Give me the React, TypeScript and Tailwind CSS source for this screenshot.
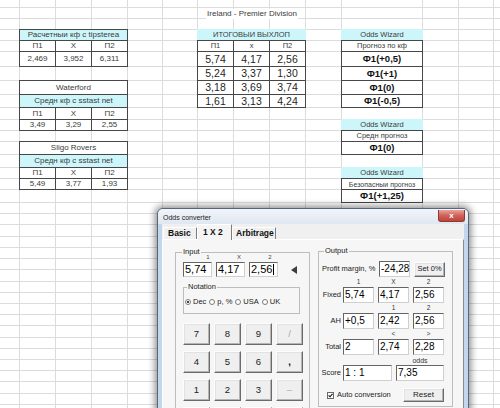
import React from "react";

// column widths / row heights of the visible part of the sheet, in px
const COLS = [20, 36, 36, 36, 35, 35, 36, 36, 36, 36, 81, 36, 35, 20];
const ROWS = [
  8, 11, 11, 11, 11, 15, 14, 14, 13, 12, 11, 11, 13, 13, 11, 11, 13, 11, 11, 12, 11, 11, 11, 12, 11, 11, 11,
  11, 12, 11, 11, 11, 11, 12, 11, 11, 11,
];

type Kind = "head" | "band" | "box" | "title";

interface SheetCell {
  r: number;
  c: number;
  span?: number;
  text: string;
  kind: Kind;
  t?: string;
}

const SMALL = "text-[8px] text-[#3b3b3b]";
const TINY = "text-[7.5px] text-[#3b3b3b]";
const BIG = "text-[10.5px] text-[#1f1f1f]";
const BOLD = "text-[9.5px] font-bold text-[#111]";

const row3 = (r: number, c: number, vals: string[], t = SMALL): SheetCell[] =>
  vals.map((text, i) => ({ r, c: c + i, text, kind: "box" as Kind, t }));

const CELLS: SheetCell[] = [
  { r: 1, c: 6, span: 3, text: "Ireland - Premier Division", kind: "title", t: SMALL },

  // tipsterea
  { r: 3, c: 1, span: 3, text: "Расчетныи кф с tipsterea", kind: "head", t: SMALL },
  ...row3(4, 1, ["П1", "X", "П2"]),
  ...row3(5, 1, ["2,469", "3,952", "6,311"]),

  // Waterford
  { r: 7, c: 1, span: 3, text: "Waterford", kind: "box", t: SMALL },
  { r: 8, c: 1, span: 3, text: "Средн кф с sstast net", kind: "head", t: SMALL },
  ...row3(9, 1, ["П1", "X", "П2"]),
  ...row3(10, 1, ["3,49", "3,29", "2,55"]),

  // Sligo Rovers
  { r: 12, c: 1, span: 3, text: "Sligo Rovers", kind: "box", t: SMALL },
  { r: 13, c: 1, span: 3, text: "Средн кф с sstast net", kind: "head", t: SMALL },
  ...row3(14, 1, ["П1", "X", "П2"]),
  ...row3(15, 1, ["5,49", "3,77", "1,93"]),

  // итог
  { r: 3, c: 6, span: 3, text: "ИТОГОВЫИ ВЫХЛОП", kind: "band", t: TINY },
  ...row3(4, 6, ["П1", "х", "П2"], TINY),
  ...row3(5, 6, ["5,74", "4,17", "2,56"], BIG),
  ...row3(6, 6, ["5,24", "3,37", "1,30"], BIG),
  ...row3(7, 6, ["3,18", "3,69", "3,74"], BIG),
  ...row3(8, 6, ["1,61", "3,13", "4,24"], BIG),

  // Odds Wizard
  { r: 3, c: 10, text: "Odds Wizard", kind: "band", t: TINY },
  { r: 4, c: 10, text: "Прогноз по кф", kind: "box", t: TINY },
  { r: 5, c: 10, text: "Ф1(+0,5)", kind: "box", t: BOLD },
  { r: 6, c: 10, text: "Ф1(+1)", kind: "box", t: BOLD },
  { r: 7, c: 10, text: "Ф1(0)", kind: "box", t: BOLD },
  { r: 8, c: 10, text: "Ф1(-0,5)", kind: "box", t: BOLD },
  { r: 10, c: 10, text: "Odds Wizard", kind: "band", t: TINY },
  { r: 11, c: 10, text: "Средн прогноз", kind: "box", t: TINY },
  { r: 12, c: 10, text: "Ф1(0)", kind: "box", t: BOLD },
  { r: 14, c: 10, text: "Odds Wizard", kind: "band", t: TINY },
  { r: 15, c: 10, text: "Безопасныи прогноз", kind: "box", t: "text-[7px] text-[#3b3b3b]" },
  { r: 16, c: 10, text: "Ф1(+1,25)", kind: "box", t: BOLD },
];

const KIND_CLS: Record<Kind, string> = {
  head: "bg-[#cdf6fa] border border-[#474747] -ml-px -mt-px",
  band: "bg-[#cdf6fa] -ml-px -mt-px",
  box: "bg-white border border-[#474747] -ml-px -mt-px",
  title: "",
};

const Sheet: React.FC = () => (
  <div className="grid grid-cols-[20px_36px_36px_36px_35px_35px_36px_36px_36px_36px_81px_36px_35px_20px] grid-rows-[8px_11px_11px_11px_11px_15px_14px_14px_13px_12px_11px_11px_13px_13px_11px_11px_13px_11px_11px_12px_11px_11px_11px_12px_11px_11px_11px_11px_12px_11px_11px_11px_11px_12px_11px_11px_11px]">
    {ROWS.map((_, r) =>
      COLS.map((_, c) => (
        <div
          key={`g${r}-${c}`}
          className="border-r border-b border-[#dcdcdc]"
          style={{ gridRow: r + 1, gridColumn: c + 1 }}
        />
      ))
    )}
    {CELLS.map((cell, i) => (
      <div
        key={i}
        className={`flex items-center justify-center overflow-hidden whitespace-nowrap leading-none ${KIND_CLS[cell.kind]} ${cell.t ?? SMALL}`}
        style={{ gridRow: cell.r + 1, gridColumn: `${cell.c + 1} / span ${cell.span ?? 1}` }}
      >
        {cell.kind === "title" ? <span className="bg-white px-[1px] py-[1px]">{cell.text}</span> : cell.text}
      </div>
    ))}
  </div>
);

// ---------- dialog ----------

const Field: React.FC<{ w: string; value: string; big?: boolean; caret?: boolean }> = ({ w, value, big, caret }) => (
  <div
    className={`${w} ${big ? "h-[15px] text-[11px]" : "h-[16px] text-[10px]"} flex items-center bg-white border border-t-[#646464] border-l-[#646464] border-r-[#cfcfcf] border-b-[#cfcfcf] pl-[1px] leading-none text-black`}
  >
    {value}
    {caret && <span className="ml-px inline-block h-[11px] w-px bg-black" />}
  </div>
);

const Btn: React.FC<{ w: string; h: string; label: string; cls?: string }> = ({ w, h, label, cls }) => (
  <div
    className={`${w} ${h} flex items-center justify-center bg-[#efefef] border border-t-[#fdfdfd] border-l-[#fdfdfd] border-r-[#6b6b6b] border-b-[#6b6b6b] shadow-[inset_-1px_-1px_0_#b4b4b4,inset_1px_1px_0_#e2e2e2] leading-none ${cls ?? "text-[#1b1b1b]"}`}
  >
    {label}
  </div>
);

const Radio: React.FC<{ on?: boolean; label: string }> = ({ on, label }) => (
  <div className="flex items-center gap-[2px]">
    <span className="flex h-[6px] w-[6px] items-center justify-center rounded-full border border-[#7b7b7b] bg-white">
      {on && <span className="h-[2px] w-[2px] rounded-full bg-black" />}
    </span>
    <span className="text-[7.5px] leading-none text-[#222]">{label}</span>
  </div>
);

// last row is cut off by the bottom of the screen, only the button tops show
const KEYS: { label: string; cls?: string }[] = [
  { label: "7" },
  { label: "8" },
  { label: "9" },
  { label: "/", cls: "text-[#a8a8a8]" },
  { label: "4" },
  { label: "5" },
  { label: "6" },
  { label: ",", cls: "font-bold text-black" },
  { label: "1" },
  { label: "2" },
  { label: "3" },
  { label: "–", cls: "text-[#a8a8a8]" },
  { label: "" },
  { label: "" },
  { label: "" },
  { label: "" },
];

const SmallLabels: React.FC<{ items: string[] }> = ({ items }) => (
  <div className="flex h-[10px] items-center gap-[4px] pl-[24px] text-[6.5px] leading-none text-[#333]">
    {items.map((t, i) => (
      <span key={i} className="w-[31px] text-center">
        {t}
      </span>
    ))}
  </div>
);

const OutRow: React.FC<{ label: string; values: string[] }> = ({ label, values }) => (
  <div className="flex h-[16px] items-center">
    <span className="w-[24px] pr-[2px] text-right text-[7.5px] leading-none text-[#222]">{label}</span>
    <div className="flex gap-[4px]">
      {values.map((v, i) => (
        <Field key={i} w="w-[31px]" value={v} />
      ))}
    </div>
  </div>
);

const Tab: React.FC<{ label: string; w: string; active?: boolean; pl: string }> = ({ label, w, active, pl }) => (
  <div
    className={`${w} ${pl} ${
      active ? "relative z-10 -mb-px h-[16px] bg-[#f4f4f4] pt-[3px]" : "h-[12px] pt-[1px]"
    } border-t border-l border-t-white border-l-white border-r border-r-[#7d7d7d] text-[8.5px] font-bold leading-none text-[#111] rounded-t-[1px]`}
  >
    {label}
  </div>
);

const OddsConverter: React.FC = () => (
  <div className="absolute left-[157px] top-[208px] flex h-[230px] w-[312px] flex-col rounded-t-[6px] border border-[#56667b] bg-[#c4d6eb] shadow-[0_0_7px_2px_rgba(0,0,0,0.45)]">
    {/* title bar */}
    <div className="flex h-[15px] items-start justify-between rounded-t-[5px] bg-gradient-to-b from-[#f2f5f9] to-[#dfe7f1] pl-[5px] pr-[3px]">
      <span className="pt-[4px] text-[7px] leading-[9px] text-[#1e1e1e]">Odds converter</span>
      <div className="mt-[1px] flex h-[12px] w-[27px] items-center justify-center rounded-b-[3px] border border-t-0 border-[#8a3a33] bg-gradient-to-b from-[#e8a39b] via-[#d0625a] to-[#c0433a] text-[8px] font-bold leading-none text-white">
        x
      </div>
    </div>

    {/* client area */}
    <div className="mx-[4px] flex flex-1 flex-col bg-[#f0f0f0]">
      <div className="flex h-[15px] items-end pl-[1px]">
        <Tab label="Basic" w="w-[34px]" pl="pl-[4px]" />
        <Tab label="1 X 2" w="w-[35px]" pl="pl-[5px]" active />
        <Tab label="Arbitrage" w="w-[44px]" pl="pl-[3px]" />
      </div>

      <div className="flex flex-1 items-start border-t border-l border-t-white border-l-white border-r border-r-[#8a8a8a] bg-[#f6f6f6] pl-[12px] pt-[8px]">
        {/* Input */}
        <fieldset className="h-[170px] w-[135px] border border-[#bdbdbd]">
          <legend className="ml-[6px] px-[1px] text-[7.5px] leading-[8px] text-[#222]">Input</legend>
          <div className="pl-[7px]">
            <div className="-mt-[2px] flex h-[6px] text-[6px] leading-[6px] text-[#444]">
              <span className="ml-[21px] w-[8px] text-center">1</span>
              <span className="ml-[23px] w-[8px] text-center">X</span>
              <span className="ml-[23px] w-[8px] text-center">2</span>
            </div>
            <div className="mt-[2px] flex h-[15px] items-center">
              <div className="flex gap-[4px]">
                <Field w="w-[29px]" value="5,74" big />
                <Field w="w-[29px]" value="4,17" big />
                <Field w="w-[29px]" value="2,56" big caret />
              </div>
              <svg className="ml-[13px]" width="6" height="8" viewBox="0 0 6 8">
                <polygon points="6,0 6,8 0,4" fill="#3e3e3e" />
              </svg>
            </div>

            <fieldset className="mt-[6px] w-[117px] border border-[#bdbdbd]">
              <legend className="ml-[3px] px-[1px] text-[7.5px] leading-[8px] text-[#222]">Notation</legend>
              <div className="flex h-[22px] items-center gap-[3px] pl-[1px]">
                <Radio on label="Dec" />
                <Radio label="p, %" />
                <Radio label="USA" />
                <Radio label="UK" />
              </div>
            </fieldset>

            <div className="mt-[9px] grid grid-cols-[27px_27px_27px_27px] gap-x-[4px] gap-y-[6px] text-[9.5px]">
              {KEYS.map((k, i) => (
                <Btn key={i} w="w-[27px]" h="h-[22px]" label={k.label} cls={k.cls} />
              ))}
            </div>
          </div>
        </fieldset>

        {/* Output */}
        <fieldset className="-mt-px ml-[8px] w-[135px] border border-[#bdbdbd] pb-[4px]">
          <legend className="ml-[5px] px-[1px] text-[7.5px] leading-[8px] text-[#222]">Output</legend>

          <div className="mt-[6px] flex h-[16px] items-center pl-[3px]">
            <span className="w-[57px] whitespace-nowrap text-[7.5px] leading-none text-[#222]">Profit margin, %</span>
            <Field w="w-[31px]" value="-24,28" />
            <div className="ml-[4px]">
              <Btn w="w-[31px]" h="h-[15px]" label="Set 0%" cls="text-[7.5px] text-[#222]" />
            </div>
          </div>

          <SmallLabels items={["1", "X", "2"]} />
          <OutRow label="Fixed" values={["5,74", "4,17", "2,56"]} />
          <SmallLabels items={["", "1", "2"]} />
          <OutRow label="AH" values={["+0,5", "2,42", "2,56"]} />
          <SmallLabels items={["", "<", ">"]} />
          <OutRow label="Total" values={["2", "2,74", "2,28"]} />
          <div className="flex h-[10px] items-center pl-[77px] text-[7px] leading-none text-[#333]">
            <span className="w-[48px] text-center">odds</span>
          </div>
          <div className="flex h-[16px] items-center">
            <span className="w-[24px] pr-[2px] text-right text-[7.5px] leading-none text-[#222]">Score</span>
            <Field w="w-[49px]" value="1 : 1" />
            <div className="ml-[4px]">
              <Field w="w-[48px]" value="7,35" />
            </div>
          </div>

          <div className="mt-[7px] flex h-[14px] items-center pl-[8px] pr-[8px]">
            <svg width="7" height="7" viewBox="0 0 7 7">
              <rect x="0.5" y="0.5" width="6" height="6" fill="#fff" stroke="#6a6a6a" />
              <polyline points="1.6,3.4 3,4.8 5.5,1.8" fill="none" stroke="#111" strokeWidth="1.1" />
            </svg>
            <span className="ml-[3px] text-[7.5px] leading-none text-[#222]">Auto conversion</span>
            <div className="ml-auto">
              <Btn w="w-[41px]" h="h-[14px]" label="Reset" cls="text-[8px] text-[#222]" />
            </div>
          </div>
        </fieldset>
      </div>
    </div>
  </div>
);

export default function App() {
  return (
    <div className="relative h-[408px] w-[500px] overflow-hidden bg-white font-['Liberation_Sans',Arial,sans-serif]">
      <Sheet />
      <OddsConverter />
    </div>
  );
}
